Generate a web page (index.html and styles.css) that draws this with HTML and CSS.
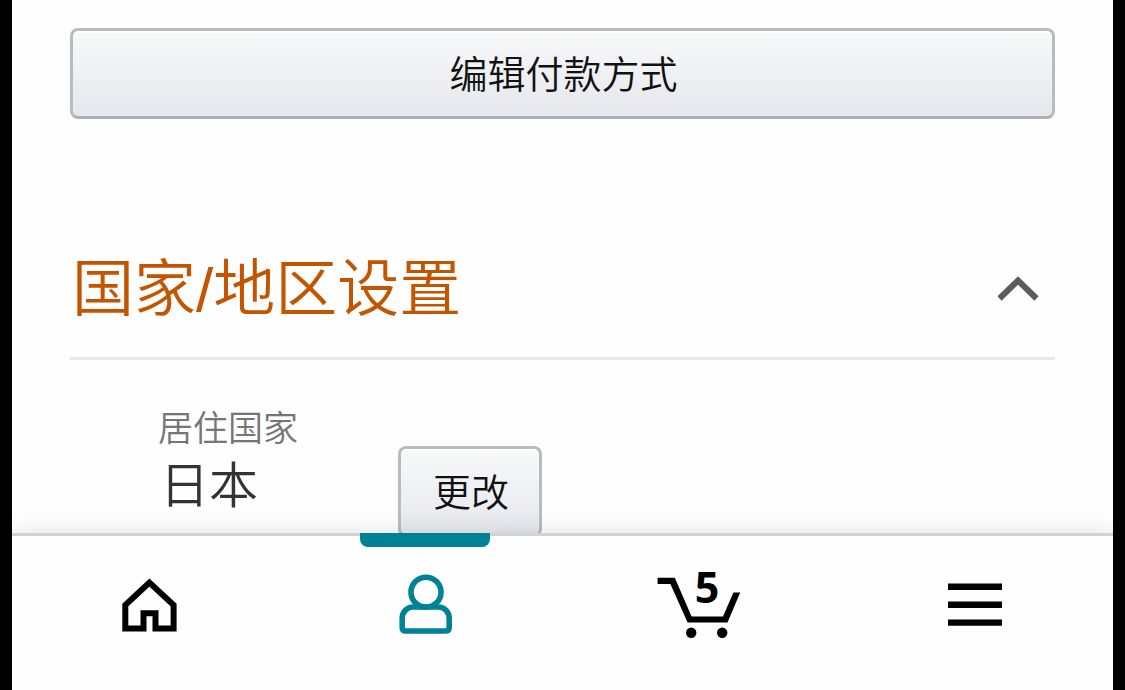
FILE: index.html
```html
<!DOCTYPE html>
<html lang="zh-CN">
<head>
<meta charset="utf-8">
<meta name="viewport" content="width=device-width, initial-scale=1">
<title>国家/地区设置</title>
<link rel="stylesheet" href="styles.css">
</head>
<body>
<div class="app">
  <main class="content">
    <button class="btn btn-wide" type="button">编辑付款方式</button>
    <section class="section">
      <h2 class="section-title">
        <button class="section-toggle" type="button" aria-expanded="true" aria-controls="region">
          <span>国家/地区设置</span>
          <svg class="chevron" viewBox="0 0 44 28" aria-hidden="true"><path d="M2.500 22.500L21 4.500L39.500 22.500" fill="none" stroke="#5c5c5c" stroke-width="6"/></svg>
        </button>
      </h2>
      <div class="region" id="region">
        <dl class="field">
          <dt class="field-label">居住国家</dt>
          <dd class="field-value">日本</dd>
        </dl>
        <button class="btn btn-change" type="button">更改</button>
      </div>
    </section>
  </main>
  <nav class="tabbar" aria-label="主导航">
    <a class="tab" href="#home" aria-label="首页">
      <svg class="icon" viewBox="0 0 90 80" aria-hidden="true"><path d="M20.300 58.500V35L44.400 12.500L68.600 35V58.500H50.500V43.300H38.500V58.500Z" fill="none" stroke="#000" stroke-width="6"/></svg>
    </a>
    <a class="tab tab-active" href="#account" aria-label="我的账户" aria-current="page">
      <svg class="icon" viewBox="0 0 90 80" aria-hidden="true"><g fill="none" stroke="#008296" stroke-width="5.600"><circle cx="46" cy="22.200" r="15"/><path d="M33.200 37H58.200A11 11 0 0 1 69.200 48V57.500Q69.200 61 65.700 61H25.700Q22.200 61 22.200 57.500V48A11 11 0 0 1 33.200 37Z"/></g></svg>
    </a>
    <a class="tab" href="#cart" aria-label="购物车，5件商品">
      <svg class="icon" viewBox="0 0 90 80" aria-hidden="true"><path d="M2.600 7.700H19.800L36.600 46.500H68L78.400 22.600H85.200L72.500 52.600H32.600L15.400 14H2.600Z"/><circle cx="36.200" cy="62.700" r="5.200"/><circle cx="67.200" cy="62.700" r="5.200"/></svg>
      <span class="cart-count">5</span>
    </a>
    <a class="tab" href="#menu" aria-label="菜单">
      <svg class="icon" viewBox="0 0 90 80" aria-hidden="true"><path d="M18 16.800H72M18 34.700H72M18 52.600H72" fill="none" stroke="#000" stroke-width="6.400"/></svg>
    </a>
  </nav>
</div>
</body>
</html>
```
FILE: styles.css
```css
* {
  box-sizing: border-box;
}

body {
  margin: 0;
  padding: 0 12px;
  background: #000;
  color: #111;
  font-family: "Liberation Sans", "Noto Sans CJK SC", sans-serif;
  font-weight: 350;
}

.app {
  display: flex;
  flex-direction: column;
  height: 100vh;
  background: #fefefe;
}

.content {
  flex: 1;
  min-height: 0;
  overflow: hidden;
  padding: 28px 58px 0;
}

.btn {
  height: 91px;
  padding: 2px 12px 0 14px;
  border: 3px solid #babbbf;
  border-bottom-color: #aeb0b5;
  border-radius: 8px;
  background: linear-gradient(#f7f9fb, #e5e7ec);
  box-shadow: inset 0 2px 1px #fff;
  color: #111;
  font-family: inherit;
  font-size: 38px;
  font-weight: inherit;
  line-height: 56px;
  white-space: nowrap;
}

.btn-wide {
  display: block;
  width: 100%;
}

.section {
  margin-top: 100px;
}

.section-title {
  margin: 0;
  border-bottom: 3px solid #e7e7e7;
  font-size: 62px;
  font-weight: inherit;
}

.section-toggle {
  display: flex;
  align-items: center;
  justify-content: space-between;
  width: 100%;
  height: 138px;
  padding: 4px 14px 0 2px;
  border: 0;
  background: none;
  color: #c45500;
  font: inherit;
  line-height: 90px;
}

.chevron {
  width: 44px;
  height: 28px;
}

.region {
  display: grid;
  grid-template-columns: 240px auto;
  justify-content: start;
  padding-left: 88px;
}

.field {
  margin: 44px 0 0;
}

.field-label {
  color: #767676;
  font-size: 35px;
  line-height: 50px;
}

.field-value {
  margin: 0;
  padding-left: 2px;
  color: #333;
  font-size: 49px;
  line-height: 64px;
}

.btn-change {
  width: 144px;
  margin-top: 86px;
}

.tabbar {
  display: grid;
  grid-template-columns: repeat(4, 1fr);
  height: 157px;
  border-top: 3px solid #cdd4d5;
  background: #fefefe;
  box-shadow: 0 -2px 20px rgba(0, 0, 0, 0.1);
  clip-path: inset(-40px 0 0 0);
}

.tab {
  position: relative;
  display: flex;
  justify-content: center;
  padding-top: 34px;
  color: #000;
}

.tab-active::before {
  content: "";
  position: absolute;
  top: -3px;
  left: 50%;
  width: 130px;
  height: 14px;
  margin-left: -65px;
  border-radius: 0 0 8px 8px;
  background: #008296;
}

.icon {
  width: 90px;
  height: 80px;
}

.cart-count {
  position: absolute;
  top: 30px;
  left: 50%;
  width: 26px;
  margin-left: -6px;
  font-family: "Open Sans", "Noto Sans", sans-serif;
  font-size: 43px;
  font-weight: 700;
  line-height: 42px;
  text-align: center;
}
```
